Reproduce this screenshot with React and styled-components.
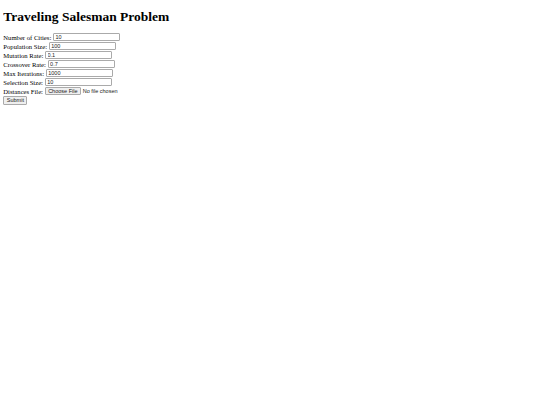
import React from 'react';
import styled, { createGlobalStyle } from 'styled-components';

const GlobalStyle = createGlobalStyle`
    body {
        margin: 3px 3.3px;
        font-family: "Liberation Serif", serif;
        font-size: 6.65px;
        background: #fff;
        color: #000;
    }
`;

const Heading = styled.h1`
    font-size: 13.5px;
    font-weight: bold;
    margin: 6px 0 7.5px;
`;

const Form = styled.form`
    display: block;
`;

const Row = styled.div`
    display: flex;
    align-items: center;
    height: 9px;
    gap: 1.7px;
`;

const Label = styled.label`
    white-space: nowrap;
`;

const TextInput = styled.input`
    box-sizing: border-box;
    width: 67px;
    height: 8.7px;
    padding: 0 1.5px;
    border: 1px solid #aaa;
    border-radius: 1px;
    font-family: "Liberation Sans", Arial, sans-serif;
    font-size: 5.5px;
    color: #222;
    outline: none;
`;

const FileInput = styled.input`
    font-family: "Liberation Sans", Arial, sans-serif;
    font-size: 5.5px;
    color: #222;
    &::file-selector-button {
        font-family: "Liberation Sans", Arial, sans-serif;
        font-size: 5.5px;
        padding: 0 2.5px;
        height: 8.5px;
        margin-right: 1.7px;
        border: 1px solid #aaa;
        border-radius: 1px;
        background: #efefef;
        color: #222;
    }
`;

const Button = styled.button`
    font-family: "Liberation Sans", Arial, sans-serif;
    font-size: 5.5px;
    height: 8.5px;
    padding: 0 2.5px;
    margin-top: 0.5px;
    border: 1px solid #aaa;
    border-radius: 1px;
    background: #efefef;
    color: #222;
    line-height: 5.5px;
`;

const fields = [
    ['Number of Cities:', '10'],
    ['Population Size:', '100'],
    ['Mutation Rate:', '0.1'],
    ['Crossover Rate:', '0.7'],
    ['Max Iterations:', '1000'],
    ['Selection Size:', '10'],
];

export default function App() {
    return (
        <>
            <GlobalStyle />
            <Heading>Traveling Salesman Problem</Heading>
            <Form onSubmit={e => e.preventDefault()}>
                {fields.map(([label, value]) => (
                    <Row key={label}>
                        <Label>{label}</Label>
                        <TextInput type="text" defaultValue={value} />
                    </Row>
                ))}
                <Row>
                    <Label>Distances File:</Label>
                    <FileInput type="file" />
                </Row>
                <Button type="submit">Submit</Button>
            </Form>
        </>
    );
}
